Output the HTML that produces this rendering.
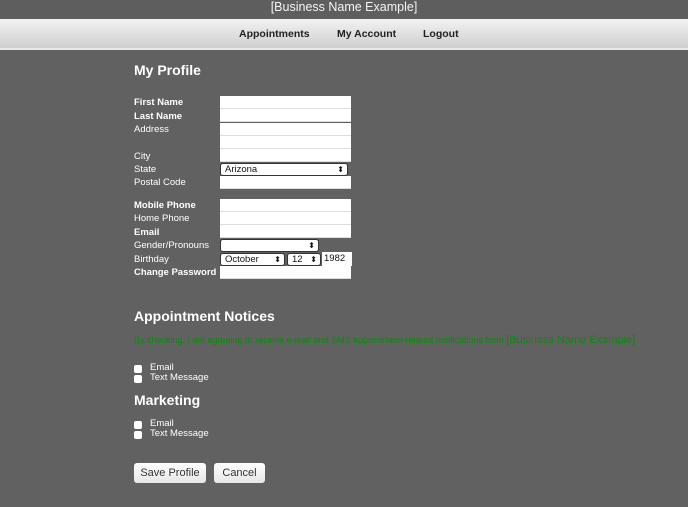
<!DOCTYPE html>
<html><head><style>
body{margin:0;width:688px;height:507px;background:#616161;font-family:"Liberation Sans",sans-serif;color:#fff;position:relative;overflow:hidden}
.a{position:absolute;white-space:nowrap}
.top{position:absolute;left:0;top:0;width:688px;height:19px;background:#5e5e5e;text-align:center;font-size:12.5px;line-height:15px;color:#f4f4f4}
.nav{position:absolute;left:0;top:19px;width:688px;height:29px;background:linear-gradient(#f2f2f2,#cfcfcf);border-bottom:2px solid #e8e8e8}
.nav span{position:absolute;top:9px;font-size:10.5px;font-weight:bold;color:#222}
h2{margin:0;position:absolute;font-size:14px;font-weight:bold;color:#fff}
.l{position:absolute;left:134px;font-size:9.5px;color:#fff}
.b{font-weight:bold}
.in{position:absolute;left:220px;width:131px;height:12px;background:#fff;border-bottom:1px solid #ddd}
.sel{position:absolute;height:11px;background:#fff;border:1px solid #333;border-radius:3px;font-size:9.5px;color:#111;line-height:11px;padding-left:4px;box-sizing:content-box}
.sel:after{content:"⬍";position:absolute;right:3px;top:0;font-size:8px}
.cb{position:absolute;left:134px;width:8px;height:8px;background:#fff;border-radius:2px}
.btn{position:absolute;top:463px;height:20px;background:linear-gradient(#fff,#e6e6e6);border-radius:3px;color:#333;font-size:11px;line-height:20px;text-align:center}
</style></head><body>
<div class="top">[Business Name Example]</div>
<div class="nav"><span style="left:239px">Appointments</span><span style="left:337px">My Account</span><span style="left:423px">Logout</span></div>
<h2 style="left:134px;top:62px">My Profile</h2>

<div class="l b" style="top:97px">First Name</div>
<div class="l b" style="top:111px">Last Name</div>
<div class="l" style="top:124px">Address</div>
<div class="l" style="top:151px">City</div>
<div class="l" style="top:164px">State</div>
<div class="l" style="top:177px">Postal Code</div>
<div class="l b" style="top:200px">Mobile Phone</div>
<div class="l" style="top:213px">Home Phone</div>
<div class="l b" style="top:227px">Email</div>
<div class="l" style="top:240px">Gender/Pronouns</div>
<div class="l" style="top:254px">Birthday</div>
<div class="l b" style="top:267px">Change Password</div>

<div class="in" style="top:96px"></div>
<div class="in" style="top:109px"></div>
<div class="in" style="top:123px"></div>
<div class="in" style="top:136px"></div>
<div class="in" style="top:149px"></div>
<div class="sel" style="left:220px;top:163px;width:122px">Arizona</div>
<div class="in" style="top:176px"></div>
<div class="in" style="top:199px"></div>
<div class="in" style="top:212px"></div>
<div class="in" style="top:225px"></div>
<div class="sel" style="left:220px;top:239px;width:93px"></div>
<div class="sel" style="left:220px;top:253px;width:59px">October</div>
<div class="sel" style="left:287px;top:253px;width:28px">12</div>
<div class="a" style="left:322px;top:252px;width:30px;height:14px;background:#fff;color:#111;font-size:9.5px;line-height:13px;padding-left:2px;box-sizing:border-box">1982</div>
<div class="in" style="top:266px"></div>

<h2 style="left:134px;top:308px">Appointment Notices</h2>
<div class="a" style="left:134px;top:334px;font-size:9px;color:#0b8a0b">By checking, I am agreeing to receive e-mail and SMS appointment-related notifications from <span style="font-size:11px">[Business Name Example]</span></div>
<div class="cb" style="top:365px"></div><div class="l" style="left:150px;top:362px">Email</div>
<div class="cb" style="top:375px"></div><div class="l" style="left:150px;top:372px">Text Message</div>
<h2 style="left:134px;top:392px">Marketing</h2>
<div class="cb" style="top:421px"></div><div class="l" style="left:150px;top:418px">Email</div>
<div class="cb" style="top:431px"></div><div class="l" style="left:150px;top:428px">Text Message</div>

<div class="btn" style="left:134px;width:72px">Save Profile</div>
<div class="btn" style="left:214px;width:51px">Cancel</div>
</body></html>
